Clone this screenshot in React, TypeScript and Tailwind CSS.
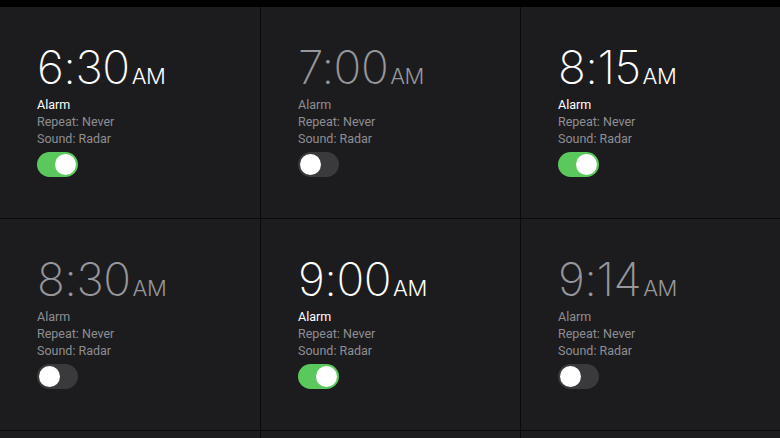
import { useState } from 'react';

type Alarm = {
  id: number;
  time: string;
  on: boolean;
};

const initial: Alarm[] = [
  { id: 1, time: '6:30', on: true },
  { id: 2, time: '7:00', on: false },
  { id: 3, time: '8:15', on: true },
  { id: 4, time: '8:30', on: false },
  { id: 5, time: '9:00', on: true },
  { id: 6, time: '9:14', on: false },
];

function Toggle({ on, onClick }: { on: boolean; onClick: () => void }) {
  return (
    <button
      onClick={onClick}
      className={`relative w-[41px] h-[25px] rounded-full ${on ? 'bg-[#5ac85c]' : 'bg-[#3a3a3c]'}`}
    >
      <span
        className={`absolute top-[2px] w-[21px] h-[21px] rounded-full bg-white ${on ? 'left-[18px]' : 'left-[2px]'}`}
      />
    </button>
  );
}

export default function App() {
  const [alarms, setAlarms] = useState<Alarm[]>(initial);

  const toggle = (id: number) => {
    setAlarms((prev) => prev.map((a) => (a.id === id ? { ...a, on: !a.on } : a)));
  };

  return (
    <div
      className="w-[780px] h-[438px] overflow-hidden bg-black pt-[7px]"
      style={{ fontFamily: 'Inter, "Noto Sans", sans-serif' }}
    >
      <div className="grid grid-cols-[260px_259px_259px] auto-rows-[211px] gap-px bg-[#0a0a0a]">
        {alarms.map((a) => (
          <div key={a.id} className="bg-[#1c1c1e] pl-[37px] pt-[37px]">
            <div
              className={`flex items-baseline leading-none font-extralight ${a.on ? 'text-white' : 'text-[#96969b]'}`}
            >
              <span className="text-[46px] tracking-[-0.5px]">{a.time}</span>
              <span className="text-[22px] font-light ml-[2px] tracking-[-0.5px]">AM</span>
            </div>
            <div className="mt-[6px] text-[12.5px] leading-[17px] font-[Roboto,sans-serif]">
              <div className={a.on ? 'text-white' : 'text-[#8e8e93]'}>Alarm</div>
              <div className="text-[#8e8e93]">Repeat: Never</div>
              <div className="text-[#8e8e93]">Sound: Radar</div>
            </div>
            <div className="mt-[5px] flex">
              <Toggle on={a.on} onClick={() => toggle(a.id)} />
            </div>
          </div>
        ))}
        <div className="bg-[#1c1c1e]" />
        <div className="bg-[#1c1c1e]" />
        <div className="bg-[#1c1c1e]" />
      </div>
    </div>
  );
}
